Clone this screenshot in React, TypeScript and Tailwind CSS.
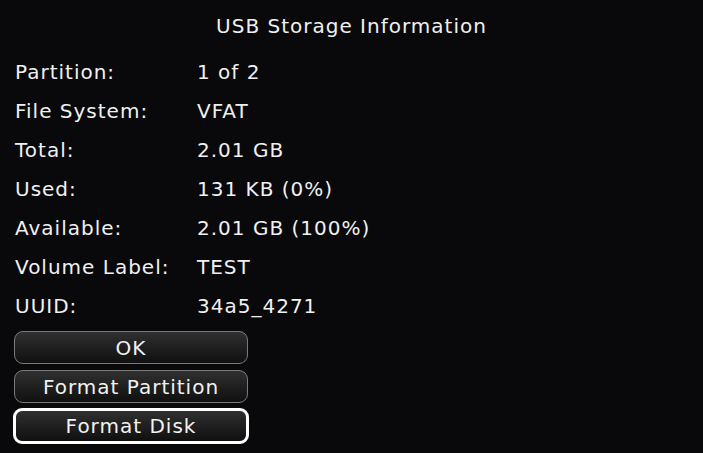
import React from 'react';

const rows = [
  ['Partition:', '1 of 2'],
  ['File System:', 'VFAT'],
  ['Total:', '2.01 GB'],
  ['Used:', '131 KB (0%)'],
  ['Available:', '2.01 GB (100%)'],
  ['Volume Label:', 'TEST'],
  ['UUID:', '34a5_4271'],
];

function Button({ label, focused }: { label: string; focused?: boolean }) {
  return (
    <button
      className={`rounded-[9px] bg-gradient-to-b from-[#303030] to-[#101010] text-[#f2f2f2] flex items-center justify-center ${
        focused ? 'h-[36px] border-[3px] border-white w-[236px] -ml-px -mt-px' : 'w-[234px] h-[33px] border-[1.5px] border-[#7a7a7a]'
      }`}
    >
      {label}
    </button>
  );
}

export default function App() {
  return (
    <div className="w-[703px] h-[453px] bg-[#09090b] text-[#f0f0f0] text-[20px] tracking-[1px] font-['DejaVu_Sans',sans-serif] overflow-hidden">
      <div className="h-[52px] pt-[12px] text-center leading-[28px]">USB Storage Information</div>
      <div className="pl-[15px]">
        {rows.map(([k, v]) => (
          <div key={k} className="flex h-[39px] items-center">
            <div className="w-[182px]">{k}</div>
            <div>{v}</div>
          </div>
        ))}
      </div>
      <div className="pl-[14px] mt-[6px] flex flex-col gap-[6px]">
        <Button label="OK" />
        <Button label="Format Partition" />
        <Button label="Format Disk" focused />
      </div>
    </div>
  );
}
